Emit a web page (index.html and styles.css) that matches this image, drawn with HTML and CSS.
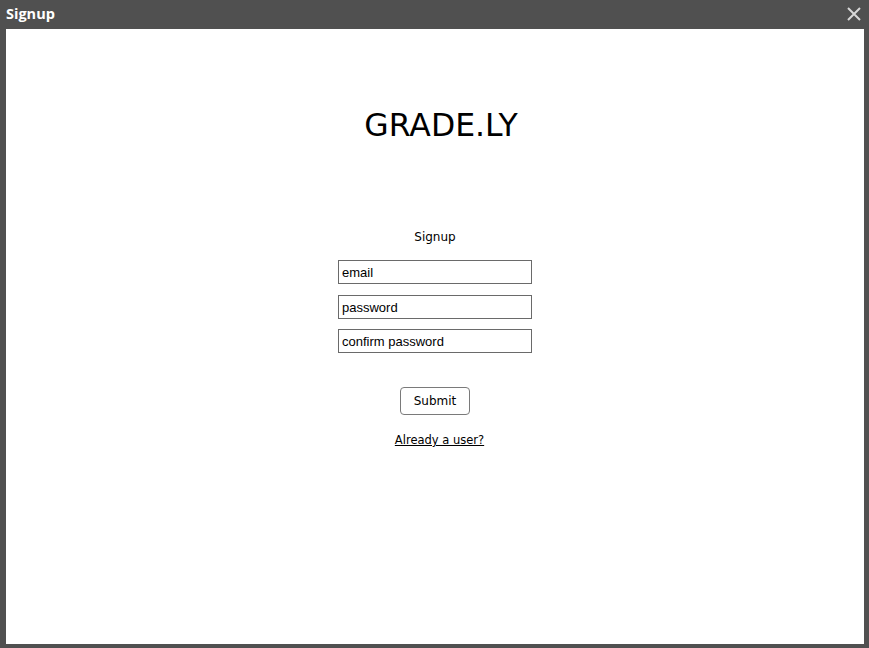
FILE: index.html
```html
<!DOCTYPE html>
<html>
<head>
<meta charset="utf-8">
<link rel="stylesheet" href="styles.css">
</head>
<body>
<div class="window">
  <div class="titlebar">
    <span class="title">Signup</span>
    <svg class="close" width="14" height="14" viewBox="0 0 14 14"><path d="M1 1L13 13M13 1L1 13" stroke="#d8d8d8" stroke-width="2" fill="none"/></svg>
  </div>
  <div class="content">
    <h1 class="logo">GRADE.LY</h1>
    <div class="form">
      <div class="label">Signup</div>
      <input class="field" type="text" value="email">
      <input class="field" type="text" value="password">
      <input class="field" type="text" value="confirm password">
      <button class="submit">Submit</button>
      <a class="link" href="#">Already a user?</a>
    </div>
  </div>
</div>
</body>
</html>
```
FILE: styles.css
```css
html, body {
  margin: 0;
  padding: 0;
  height: 100%;
  background: #505050;
}
.window {
  display: flex;
  flex-direction: column;
  height: 648px;
  width: 869px;
}
.titlebar {
  height: 29px;
  display: flex;
  align-items: center;
  justify-content: space-between;
  padding: 0 8px 0 6px;
  flex: none;
}
.title {
  color: #fff;
  font-family: "Open Sans", sans-serif;
  font-weight: bold;
  font-size: 14.5px;
  margin-top: -2px;
}
.close {
  margin-top: -2px;
}
.content {
  background: #fff;
  margin: 0 5px 4px 6px;
  flex: 1;
  display: flex;
  flex-direction: column;
  align-items: center;
}
.logo {
  margin: 76px 0 0 12px;
  font-family: "DejaVu Sans", sans-serif;
  font-weight: normal;
  font-size: 31.5px;
  color: #000;
  line-height: 40px;
}
.form {
  margin-top: 84px;
  display: flex;
  flex-direction: column;
  align-items: center;
  font-family: "DejaVu Sans", sans-serif;
  font-size: 12px;
}
.label {
  color: #000;
  line-height: 16px;
  margin-bottom: 15px;
}
.field {
  box-sizing: border-box;
  width: 194px;
  height: 24px;
  border: 1px solid #6a6a6a;
  padding: 0 3px;
  margin: 0 0 10px 0;
  font-family: "Liberation Sans", sans-serif;
  font-size: 13px;
  color: #000;
  background: #fff;
  outline: none;
}
.field:first-of-type {
  margin-bottom: 11px;
}
.submit {
  margin-top: 24px;
  box-sizing: border-box;
  width: 70px;
  height: 28px;
  border: 1px solid #7a7a7a;
  border-radius: 4px;
  background: #fff;
  font-family: "DejaVu Sans", sans-serif;
  font-size: 12px;
  color: #000;
}
.link {
  margin: 18px 0 0 9px;
  color: #000;
  text-decoration: underline;
  font-size: 11.5px;
}
```
